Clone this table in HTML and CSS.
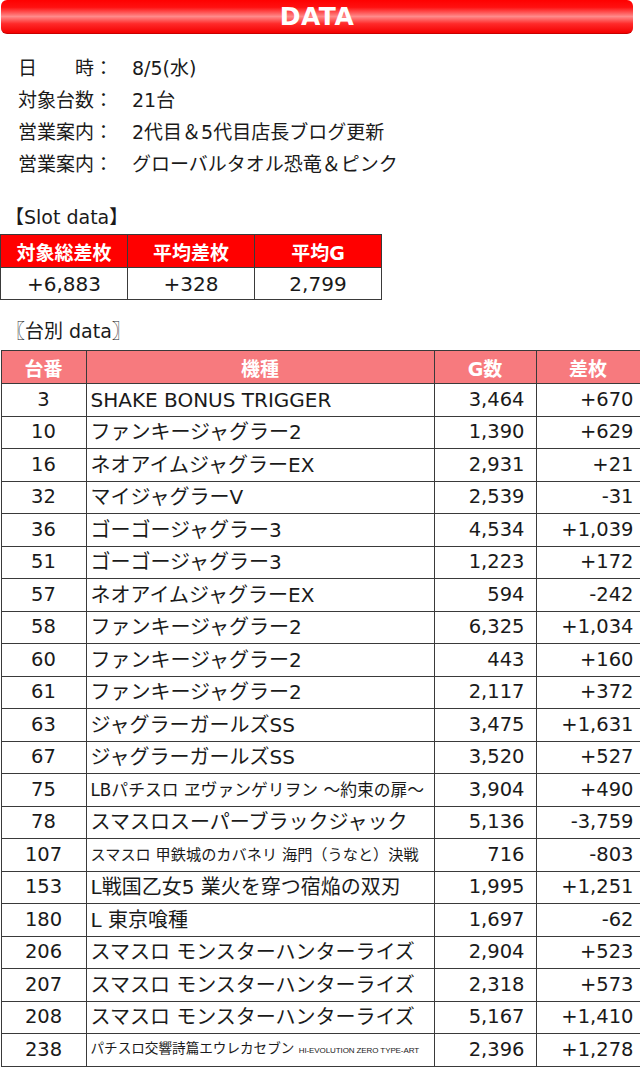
FILE: index.html
```html
<!DOCTYPE html>
<html lang="ja">
<head>
<meta charset="utf-8">
<title>DATA</title>
<link rel="stylesheet" href="styles.css">
</head>
<body>
<div class="page">
  <div class="titlebar">DATA</div>

  <div class="info">
    <div class="info-row"><span class="label">日　　時：</span><span class="value">8/5(水)</span></div>
    <div class="info-row"><span class="label">対象台数：</span><span class="value">21台</span></div>
    <div class="info-row"><span class="label">営業案内：</span><span class="value">2代目＆5代目店長ブログ更新</span></div>
    <div class="info-row"><span class="label">営業案内：</span><span class="value">グローバルタオル恐竜＆ピンク</span></div>
  </div>

  <div class="section-title slot-title">【Slot data】</div>
  <table class="summary">
    <tr class="summary-head"><th>対象総差枚</th><th>平均差枚</th><th>平均G</th></tr>
    <tr class="summary-body"><td>+6,883</td><td>+328</td><td>2,799</td></tr>
  </table>

  <div class="section-title machine-title">〖台別 data〗</div>
  <table class="machines">
    <colgroup>
      <col class="c-no"><col class="c-name"><col class="c-g"><col class="c-diff">
    </colgroup>
    <tr class="machines-head"><th>台番</th><th>機種</th><th>G数</th><th>差枚</th></tr>
    <tr><td class="no">3</td><td class="name">SHAKE BONUS TRIGGER</td><td class="g">3,464</td><td class="diff">+670</td></tr>
    <tr><td class="no">10</td><td class="name">ファンキージャグラー2</td><td class="g">1,390</td><td class="diff">+629</td></tr>
    <tr><td class="no">16</td><td class="name">ネオアイムジャグラーEX</td><td class="g">2,931</td><td class="diff">+21</td></tr>
    <tr><td class="no">32</td><td class="name">マイジャグラーV</td><td class="g">2,539</td><td class="diff">-31</td></tr>
    <tr><td class="no">36</td><td class="name">ゴーゴージャグラー3</td><td class="g">4,534</td><td class="diff">+1,039</td></tr>
    <tr><td class="no">51</td><td class="name">ゴーゴージャグラー3</td><td class="g">1,223</td><td class="diff">+172</td></tr>
    <tr><td class="no">57</td><td class="name">ネオアイムジャグラーEX</td><td class="g">594</td><td class="diff">-242</td></tr>
    <tr><td class="no">58</td><td class="name">ファンキージャグラー2</td><td class="g">6,325</td><td class="diff">+1,034</td></tr>
    <tr><td class="no">60</td><td class="name">ファンキージャグラー2</td><td class="g">443</td><td class="diff">+160</td></tr>
    <tr><td class="no">61</td><td class="name">ファンキージャグラー2</td><td class="g">2,117</td><td class="diff">+372</td></tr>
    <tr><td class="no">63</td><td class="name">ジャグラーガールズSS</td><td class="g">3,475</td><td class="diff">+1,631</td></tr>
    <tr><td class="no">67</td><td class="name">ジャグラーガールズSS</td><td class="g">3,520</td><td class="diff">+527</td></tr>
    <tr><td class="no">75</td><td class="name small16">LBパチスロ ヱヴァンゲリヲン ～約束の扉～</td><td class="g">3,904</td><td class="diff">+490</td></tr>
    <tr><td class="no">78</td><td class="name">スマスロスーパーブラックジャック</td><td class="g">5,136</td><td class="diff">-3,759</td></tr>
    <tr><td class="no">107</td><td class="name small15">スマスロ 甲鉄城のカバネリ 海門（うなと）決戦</td><td class="g">716</td><td class="diff">-803</td></tr>
    <tr><td class="no">153</td><td class="name">L戦国乙女5 業火を穿つ宿焔の双刃</td><td class="g">1,995</td><td class="diff">+1,251</td></tr>
    <tr><td class="no">180</td><td class="name">L 東京喰種</td><td class="g">1,697</td><td class="diff">-62</td></tr>
    <tr><td class="no">206</td><td class="name">スマスロ モンスターハンターライズ</td><td class="g">2,904</td><td class="diff">+523</td></tr>
    <tr><td class="no">207</td><td class="name">スマスロ モンスターハンターライズ</td><td class="g">2,318</td><td class="diff">+573</td></tr>
    <tr><td class="no">208</td><td class="name">スマスロ モンスターハンターライズ</td><td class="g">5,167</td><td class="diff">+1,410</td></tr>
    <tr><td class="no">238</td><td class="name small14">パチスロ交響詩篇エウレカセブン <span class="tiny">HI-EVOLUTION ZERO TYPE-ART</span></td><td class="g">2,396</td><td class="diff">+1,278</td></tr>
  </table>
</div>
</body>
</html>
```

FILE: styles.css
```css
html, body {
  margin: 0;
  padding: 0;
  background: #ffffff;
}

body {
  font-family: "DejaVu Sans", "Noto Sans CJK JP", sans-serif;
  color: #1a1a1a;
}

.page {
  width: 640px;
}

.titlebar {
  width: 632px;
  height: 33px;
  margin-left: 1px;
  border-radius: 6px;
  border-bottom: 1px solid #c80000;
  background: linear-gradient(#ff0000 0%, #ff1010 22%, #ff8a8a 50%, #ff2a2a 72%, #f40000 100%);
  color: #ffffff;
  font-family: "DejaVu Sans", sans-serif;
  font-weight: bold;
  font-size: 25px;
  line-height: 33px;
  text-align: center;
  letter-spacing: 0.5px;
}

.info {
  margin-top: 18px;
  padding-left: 18px;
  font-size: 19px;
}

.info-row {
  display: flex;
  height: 32px;
  line-height: 32px;
  white-space: nowrap;
}

.label {
  width: 114px;
  flex: none;
}

.section-title {
  font-size: 19px;
  height: 32px;
  line-height: 32px;
  white-space: nowrap;
}

.slot-title {
  margin-top: 21px;
  padding-left: 5px;
}

.summary {
  border-collapse: collapse;
  width: 382px;
  margin-top: 1px;
  table-layout: fixed;
}

.summary th,
.summary td {
  border: 1px solid #3a3a3a;
  padding: 0;
  text-align: center;
  vertical-align: middle;
}

.summary-head th {
  background: #ff0000;
  color: #ffffff;
  font-weight: bold;
  font-size: 19px;
  height: 32px;
}

.summary-body td {
  font-size: 20px;
  height: 31px;
  color: #1a1a1a;
}

.machine-title {
  margin-top: 15px;
  padding-left: 6px;
}

.machines {
  border-collapse: collapse;
  table-layout: fixed;
  width: 639px;
  margin-left: 0.5px;
  margin-top: 3px;
}

.c-no { width: 85px; }
.c-name { width: 348px; }
.c-g { width: 102px; }
.c-diff { width: 104px; }

.machines th,
.machines td {
  border: 1px solid #3a3a3a;
  padding: 0;
  vertical-align: middle;
  white-space: nowrap;
  overflow: hidden;
}

.machines-head th {
  background: #f77a7e;
  color: #ffffff;
  font-weight: bold;
  font-size: 19px;
  height: 32px;
  text-align: center;
}

.machines td {
  height: 31.5px;
  font-size: 19.5px;
  line-height: 24px;
}

.machines td.no {
  text-align: center;
}

.machines td.name {
  padding-left: 4px;
  font-size: 20px;
  text-align: left;
}

.machines td.name.small16 {
  font-size: 16.8px;
}

.machines td.name.small15 {
  font-size: 15.2px;
}

.machines td.name.small14 {
  font-size: 13.6px;
}

.tiny {
  font-family: "Liberation Sans", sans-serif;
  font-size: 8px;
  letter-spacing: -0.1px;
}

.machines td.g {
  text-align: right;
  padding-right: 11px;
}

.machines td.diff {
  text-align: right;
  padding-right: 6px;
}
```
